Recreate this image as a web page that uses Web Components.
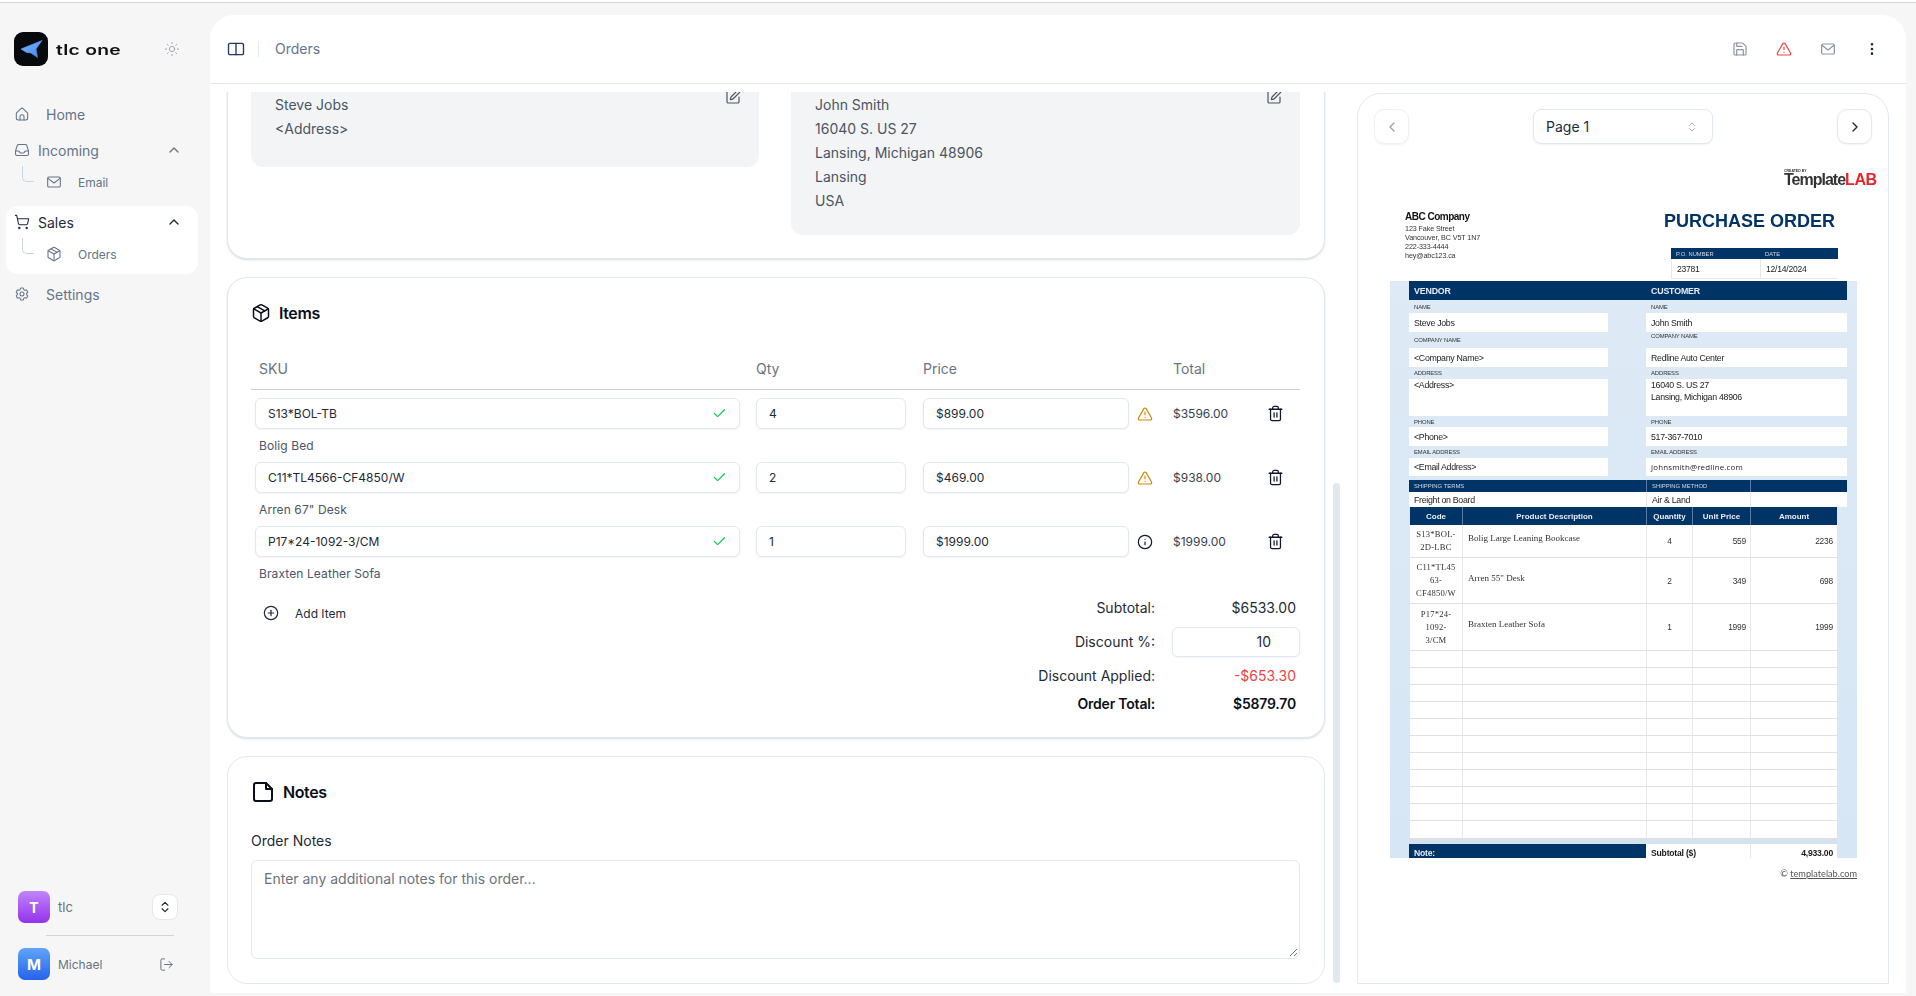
<!DOCTYPE html>
<html lang="en">
<head>
<meta charset="utf-8">
<title>Orders</title>
<style>
  html, body { margin: 0; padding: 0; height: 100%; overflow: hidden; background: #f6f6f6; font-family: Inter, "Liberation Sans", sans-serif; }
</style>
</head>
<body>
<app-shell></app-shell>

<script>
const ICONS = {
  home: '<path d="M3.5 10.6 10.4 4a2.3 2.3 0 0 1 3.2 0l6.9 6.6V18a3 3 0 0 1-3 3h-11a3 3 0 0 1-3-3z"/><path d="M9 21v-5a3 3 0 0 1 6 0v5"/>',
  inbox: '<path d="M2.25 13.5h3.86a2.25 2.25 0 0 1 2.012 1.244l.256.512a2.25 2.25 0 0 0 2.013 1.244h3.218a2.25 2.25 0 0 0 2.013-1.244l.256-.512a2.25 2.25 0 0 1 2.013-1.244h3.859m-19.5.338V18a2.25 2.25 0 0 0 2.25 2.25h15A2.25 2.25 0 0 0 21.75 18v-4.162c0-.224-.034-.447-.1-.661L19.24 5.338a2.25 2.25 0 0 0-2.15-1.588H6.911a2.25 2.25 0 0 0-2.15 1.588L2.35 13.177a2.25 2.25 0 0 0-.1.661Z"/>',
  mail: '<rect x="2.5" y="4.5" width="19" height="15" rx="2"/><path d="m3 6.5 9 7 9-7"/>',
  cart: '<circle cx="8" cy="21" r="1"/><circle cx="19" cy="21" r="1"/><path d="M2.05 2.05h2l2.66 12.42a2 2 0 0 0 2 1.58h9.78a2 2 0 0 0 1.95-1.57l1.65-7.43H5.12"/>',
  box: '<path d="m7.5 4.27 9 5.15"/><path d="M21 8a2 2 0 0 0-1-1.73l-7-4a2 2 0 0 0-2 0l-7 4A2 2 0 0 0 3 8v8a2 2 0 0 0 1 1.73l7 4a2 2 0 0 0 2 0l7-4A2 2 0 0 0 21 16Z"/><path d="m3.3 7 8.7 5 8.7-5"/><path d="M12 22V12"/>',
  cog: '<path d="M9.594 3.94c.09-.542.56-.94 1.11-.94h2.593c.55 0 1.02.398 1.11.94l.213 1.281c.063.374.313.686.645.87.074.04.147.083.22.127.325.196.72.257 1.075.124l1.217-.456a1.125 1.125 0 0 1 1.37.49l1.296 2.247a1.125 1.125 0 0 1-.26 1.431l-1.003.827c-.293.241-.438.613-.43.992a7.723 7.723 0 0 1 0 .255c-.008.378.137.75.43.991l1.004.827c.424.35.534.955.26 1.43l-1.298 2.247a1.125 1.125 0 0 1-1.369.491l-1.217-.456c-.355-.133-.75-.072-1.076.124a6.47 6.47 0 0 1-.22.128c-.331.183-.581.495-.644.869l-.213 1.281c-.09.543-.56.94-1.11.94h-2.594c-.55 0-1.019-.398-1.11-.94l-.213-1.281c-.062-.374-.312-.686-.644-.87a6.52 6.52 0 0 1-.22-.127c-.325-.196-.72-.257-1.076-.124l-1.217.456a1.125 1.125 0 0 1-1.369-.49l-1.297-2.247a1.125 1.125 0 0 1 .26-1.431l1.004-.827c.292-.24.437-.613.43-.991a6.932 6.932 0 0 1 0-.255c.007-.38-.138-.751-.43-.992l-1.004-.827a1.125 1.125 0 0 1-.26-1.43l1.297-2.247a1.125 1.125 0 0 1 1.37-.491l1.216.456c.356.133.751.072 1.076-.124.072-.044.146-.086.22-.128.332-.183.582-.495.644-.869l.214-1.28Z"/><path d="M15 12a3 3 0 1 1-6 0 3 3 0 0 1 6 0Z"/>',
  sun: '<circle cx="12" cy="12" r="4"/><path d="M12 2v2M12 20v2M4.93 4.93l1.41 1.41M17.66 17.66l1.41 1.41M2 12h2M20 12h2M6.34 17.66l-1.41 1.41M19.07 4.93l-1.41 1.41"/>',
  panel: '<rect x="2" y="4.5" width="20" height="15" rx="2"/><path d="M12 4.5v15"/>',
  pen: '<path d="M12 3H5a2 2 0 0 0-2 2v14a2 2 0 0 0 2 2h14a2 2 0 0 0 2-2v-7"/><path d="M18.375 2.625a1 1 0 0 1 3 3l-9.013 9.014a2 2 0 0 1-.853.505l-2.873.84a.5.5 0 0 1-.62-.62l.84-2.873a2 2 0 0 1 .506-.852z"/>',
  warn: '<path d="m21.73 18-8-14a2 2 0 0 0-3.48 0l-8 14A2 2 0 0 0 4 21h16a2 2 0 0 0 1.73-3"/><path d="M12 9v4"/><path d="M12 17h.01"/>',
  info: '<circle cx="12" cy="12" r="10"/><path d="M12 16v-4"/><path d="M12 8h.01"/>',
  trash: '<path d="M3 6h18"/><path d="M19 6v14c0 1-1 2-2 2H7c-1 0-2-1-2-2V6"/><path d="M8 6V4c0-1 1-2 2-2h4c1 0 2 1 2 2v2"/><path d="M10 11v6"/><path d="M14 11v6"/>',
  check: '<path d="M20 6 9 17l-5-5"/>',
  plus: '<circle cx="12" cy="12" r="10"/><path d="M8 12h8"/><path d="M12 8v8"/>',
  note: '<path d="M15 3H5a2 2 0 0 0-2 2v14a2 2 0 0 0 2 2h14a2 2 0 0 0 2-2V9z"/><path d="M15 3v6h6"/>',
  save: '<path d="M15.2 3a2 2 0 0 1 1.4.6l3.8 3.8a2 2 0 0 1 .6 1.4V19a2 2 0 0 1-2 2H5a2 2 0 0 1-2-2V5a2 2 0 0 1 2-2z"/><path d="M17 21v-7a1 1 0 0 0-1-1H8a1 1 0 0 0-1 1v7"/><path d="M7 3v4a1 1 0 0 0 1 1h7"/>',
  dots: '<circle cx="12" cy="5" r="1"/><circle cx="12" cy="12" r="1"/><circle cx="12" cy="19" r="1"/>',
  up: '<path d="m18 15-6-6-6 6"/>',
  left: '<path d="m15 18-6-6 6-6"/>',
  right: '<path d="m9 18 6-6-6-6"/>',
  updown: '<path d="m7 15 5 5 5-5"/><path d="m7 9 5-5 5 5"/>',
  logout: '<path d="M9 21H5a2 2 0 0 1-2-2V5a2 2 0 0 1 2-2h4"/><path d="m16 17 5-5-5-5"/><path d="M21 12H9"/>'
};

class UiIcon extends HTMLElement {
  connectedCallback() {
    const size = this.getAttribute('size') || 16;
    const stroke = this.getAttribute('stroke') || 2;
    const root = this.attachShadow({ mode: 'open' });
    root.innerHTML = `
      <style>:host { display: inline-flex; flex: none; width: ${size}px; height: ${size}px; } svg { display: block; }</style>
      <svg xmlns="http://www.w3.org/2000/svg" viewBox="0 0 24 24" width="${size}" height="${size}" fill="none" stroke="currentColor" stroke-width="${stroke}" stroke-linecap="round" stroke-linejoin="round">${ICONS[this.getAttribute('name')]}</svg>`;
  }
}
customElements.define('ui-icon', UiIcon);

// sidebar row, top level or child
class NavItem extends HTMLElement {
  connectedCallback() {
    const icon = this.getAttribute('icon');
    const child = this.hasAttribute('child');
    const wide = this.hasAttribute('wide');
    const open = this.hasAttribute('open');
    const active = this.hasAttribute('active');
    const root = this.attachShadow({ mode: 'open' });
    root.innerHTML = `
      <style>
        :host { display: flex; align-items: center; height: 32px; font-size: 14px; color: ${active ? '#1e293b' : '#64748b'}; }
        .icon { margin-left: 8px; display: flex; margin-right: ${wide ? 16 : 8}px; }
        :host([child]) { font-size: 12px; }
        .branch { width: 12px; height: 16px; margin-left: 16px; margin-right: 12px; align-self: flex-start; border-left: 1px solid #cbd5e1; border-bottom: 1px solid #cbd5e1; border-bottom-left-radius: 5px; box-sizing: border-box; }
        :host([child]) .icon { margin-left: 0; margin-right: 16px; }
        .chev { margin-left: auto; margin-right: 16px; display: flex; }
      </style>
      ${child ? '<span class="branch"></span>' : ''}
      <span class="icon"><ui-icon name="${icon}" size="16" stroke="1.6"></ui-icon></span>
      <slot></slot>
      ${open ? '<span class="chev"><ui-icon name="up" size="16" stroke="2"></ui-icon></span>' : ''}`;
  }
}
customElements.define('nav-item', NavItem);

const sideTemplate = document.createElement('template');
sideTemplate.innerHTML = `
  <style>
    :host { display: flex; flex-direction: column; flex: none; width: 210px; box-sizing: border-box; padding-bottom: 16px; }
    .brand { display: flex; align-items: center; margin: 29px 0 32px 14px; }
    .logo { width: 34px; height: 34px; border-radius: 9px; background: #08090c; display: block; flex: none; }
    .word { margin-left: 8px; font: 600 14px Inter, sans-serif; color: #111; letter-spacing: .2px; display: inline-block; transform: scaleX(1.38); transform-origin: left center; white-space: nowrap; }
    .sun { margin-left: auto; margin-right: 30px; color: #9ca3af; display: flex; }
    nav { display: flex; flex-direction: column; margin-left: 6px; width: 192px; gap: 4px; }
    .open { display: flex; flex-direction: column; }
    .group { background: #fff; border-radius: 12px; padding-bottom: 4px; margin-top: 4px; }
    .foot { margin-top: auto; display: flex; flex-direction: column; padding-left: 18px; }
    .row { display: flex; align-items: center; height: 32px; }
    .av { width: 32px; height: 32px; border-radius: 7px; color: #fff; font-size: 14px; font-weight: 700; display: flex; align-items: center; justify-content: center; margin-right: 8px; }
    .t { background: linear-gradient(#c084fc, #9333ea); }
    .m { background: linear-gradient(#60a5fa, #2563eb); font-size: 15px; }
    .name { color: #6b7280; font-size: 13px; }
    .michael { font-size: 12px; }
    .sw { margin-left: auto; margin-right: 32px; width: 26px; height: 26px; box-sizing: border-box; background: #fff; border: 1px solid #e5e7eb; border-radius: 8px; display: flex; align-items: center; justify-content: center; color: #1f2937; }
    .out { margin-left: auto; margin-right: 36px; color: #6b7280; display: flex; }
    hr { border: 0; height: 1px; background: #d4d4d8; margin: 12px 36px 12px 28px; }
  </style>
  <div class="brand">
    <svg class="logo" viewBox="0 0 34 34" xmlns="http://www.w3.org/2000/svg">
      <defs><linearGradient id="pl" x1="0" y1="0" x2="1" y2="1"><stop offset="0" stop-color="#7ab3fc"/><stop offset="1" stop-color="#4189f7"/></linearGradient></defs>
      <path fill="url(#pl)" stroke="url(#pl)" stroke-width=".6" stroke-linejoin="round" d="M7 17 28 8.5 22 17 23.5 25.5 17 21 12.5 20.5z"/>
    </svg>
    <span class="word">tlc one</span>
    <span class="sun"><ui-icon name="sun" size="16" stroke="1.4"></ui-icon></span>
  </div>
  <nav>
    <nav-item icon="home" wide>Home</nav-item>
    <div class="open">
      <nav-item icon="inbox" open>Incoming</nav-item>
      <nav-item icon="mail" child>Email</nav-item>
    </div>
    <div class="open group">
      <nav-item icon="cart" open active>Sales</nav-item>
      <nav-item icon="box" child>Orders</nav-item>
    </div>
    <nav-item icon="cog" wide>Settings</nav-item>
  </nav>
  <div class="foot">
    <div class="row">
      <span class="av t">T</span><span class="name">tlc</span>
      <span class="sw"><ui-icon name="updown" size="14" stroke="2"></ui-icon></span>
    </div>
    <hr>
    <div class="row">
      <span class="av m">M</span><span class="name michael">Michael</span>
      <span class="out"><ui-icon name="logout" size="15" stroke="1.6"></ui-icon></span>
    </div>
  </div>`;
class SideBar extends HTMLElement {
  constructor() {
    super();
    this.attachShadow({ mode: 'open' }).appendChild(sideTemplate.content.cloneNode(true));
  }
}
customElements.define('side-bar', SideBar);

const topTemplate = document.createElement('template');
topTemplate.innerHTML = `
  <style>
    :host { display: flex; align-items: center; height: 69px; padding-bottom: 1px; flex: none; box-sizing: border-box; border-bottom: 1px solid #e2e8f0; padding-left: 17px; padding-right: 26px; }
    .panel { color: #1e3a5f; display: flex; }
    .sep { width: 1px; height: 16px; background: #e2e8f0; margin: 0 16px 0 13px; }
    .crumb { font-size: 14px; color: #64748b; }
    .acts { margin-left: auto; display: flex; gap: 28px; color: #8a94a6; }
    .red { color: #ef4444; }
    .dark { color: #1e293b; }
  </style>
  <span class="panel"><ui-icon name="panel" size="18" stroke="1.8"></ui-icon></span>
  <span class="sep"></span>
  <span class="crumb">Orders</span>
  <div class="acts">
    <ui-icon name="save" size="16" stroke="1.8"></ui-icon>
    <ui-icon class="red" name="warn" size="16" stroke="1.8"></ui-icon>
    <ui-icon name="mail" size="16" stroke="1.8"></ui-icon>
    <ui-icon class="dark" name="dots" size="16" stroke="2"></ui-icon>
  </div>`;
class TopBar extends HTMLElement {
  constructor() {
    super();
    this.attachShadow({ mode: 'open' }).appendChild(topTemplate.content.cloneNode(true));
  }
}
customElements.define('top-bar', TopBar);

class CardBox extends HTMLElement {
  constructor() {
    super();
    this.attachShadow({ mode: 'open' }).innerHTML = `
      <style>
        :host { display: block; box-sizing: border-box; background: #fff; border: 1px solid #e2e8f0; border-radius: 20px; padding: 23px 24px 23px 23px; box-shadow: 0 1px 2px rgba(100,116,139,.25); }
        :host([flat]) { box-shadow: none; padding-bottom: 24px; }
      </style>
      <slot></slot>`;
  }
}
customElements.define('card-box', CardBox);

class CardHeading extends HTMLElement {
  connectedCallback() {
    const size = this.getAttribute('size');
    const gap = this.getAttribute('gap');
    this.attachShadow({ mode: 'open' }).innerHTML = `
      <style>
        :host { display: flex; align-items: center; height: 24px; font-size: 16px; font-weight: 600; color: #0b0f19; letter-spacing: -.4px; }
        ui-icon { margin-right: ${gap}px; margin-left: ${this.getAttribute('left')}px; }
      </style>
      <ui-icon name="${this.getAttribute('icon')}" size="${size}" stroke="${this.getAttribute('stroke')}"></ui-icon><slot></slot>`;
  }
}
customElements.define('card-heading', CardHeading);

class AddressBox extends HTMLElement {
  constructor() {
    super();
    this.attachShadow({ mode: 'open' }).innerHTML = `
      <style>
        :host { display: flex; justify-content: space-between; background: #f3f4f6; border-radius: 12px; padding: 16px 18px 24px 24px; font-size: 14px; line-height: 24px; color: #4b5563; align-self: start; }
        ui-icon { color: #4b5563; margin-top: -4px; }
      </style>
      <div><slot></slot></div>
      <ui-icon name="pen" size="16" stroke="1.8"></ui-icon>`;
  }
}
customElements.define('address-box', AddressBox);

class TextField extends HTMLElement {
  constructor() {
    super();
    this.attachShadow({ mode: 'open' }).innerHTML = `
      <style>
        :host { display: flex; align-items: center; justify-content: space-between; height: 31px; box-sizing: border-box; background: #fff; border: 1px solid #e2e8f0; border-radius: 6px; padding: 0 12px 0 12px; font-size: 12px; color: #1f2937; box-shadow: 0 1px 2px rgba(15,23,42,.05); }
      </style>
      <slot></slot><slot name="end"></slot>`;
  }
}
customElements.define('text-field', TextField);

const GRID = 'display: grid; grid-template-columns: 501px 167px 206px 44px 82px 40px; padding-left: 4px;';

class LineItem extends HTMLElement {
  connectedCallback() {
    const a = n => this.getAttribute(n);
    const status = a('status') === 'warn'
      ? '<ui-icon class="warn" name="warn" size="16" stroke="1.8"></ui-icon>'
      : '<ui-icon class="info" name="info" size="16" stroke="1.8"></ui-icon>';
    this.attachShadow({ mode: 'open' }).innerHTML = `
      <style>
        :host { display: block; height: 64px; }
        .grid { ${GRID} align-items: center; }
        .sku { margin-right: 16px; } .qty { margin-right: 17px; }
        .check { color: #22c55e; }
        .st { padding-left: 8px; display: flex; }
        .warn { color: #ca8a04; } .info { color: #111827; }
        .total { font-size: 12px; color: #374151; }
        .bin { display: flex; justify-content: center; color: #111827; }
        .desc { padding-left: 4px; margin-left: 4px; height: 33px; display: flex; align-items: center; font-size: 12px; letter-spacing: .1px; color: #4b5563; }
      </style>
      <div class="grid">
        <text-field class="sku">${a('sku')}<ui-icon class="check" slot="end" name="check" size="15" stroke="2"></ui-icon></text-field>
        <text-field class="qty">${a('qty')}</text-field>
        <text-field>${a('price')}</text-field>
        <span class="st">${status}</span>
        <span class="total">${a('total')}</span>
        <span class="bin"><ui-icon name="trash" size="17" stroke="1.8"></ui-icon></span>
      </div>
      <div class="desc">${a('desc')}</div>`;
  }
}
customElements.define('line-item', LineItem);

const itemsTemplate = document.createElement('template');
itemsTemplate.innerHTML = `
  <style>
    :host { display: block; }
    .head { ${GRID} margin-top: 34px; height: 31px; box-sizing: border-box; border-bottom: 1px solid #cbd0d6; margin-bottom: 8px; font-size: 14px; line-height: 20px; color: #6b7280; }
    .sku { padding-left: 4px; }
    .foot { display: flex; justify-content: space-between; }
    .add { display: flex; align-items: center; height: 20px; margin: 13px 0 0 12px; font-size: 12px; color: #1f2937; }
    .add ui-icon { margin-right: 16px; }
    .sum { display: grid; grid-template-columns: auto 128px; column-gap: 17px; align-items: center; margin-top: 8px; font-size: 14px; line-height: 20px; color: #1f2937; }
    .sum > span:nth-child(odd) { text-align: right; }
    .v { text-align: right; padding-right: 4px; }
    .pct { height: 30px; box-sizing: border-box; background: #fff; border: 1px solid #e2e8f0; border-radius: 6px; display: flex; align-items: center; justify-content: flex-end; padding-right: 28px; margin: 9px 0; color: #1f2937; box-shadow: 0 1px 2px rgba(15,23,42,.05); }
    .red { color: #ef4444; }
    .b { font-weight: 600; color: #0b0f19; margin-top: 8px; letter-spacing: -.2px; }
  </style>
  <card-heading icon="box" size="20" stroke="1.8" gap="8" left="0">Items</card-heading>
  <div class="head"><span class="sku">SKU</span><span>Qty</span><span>Price</span><span></span><span>Total</span></div>
  <line-item sku="S13*BOL-TB" qty="4" price="$899.00" status="warn" total="$3596.00" desc="Bolig Bed"></line-item>
  <line-item sku="C11*TL4566-CF4850/W" qty="2" price="$469.00" status="warn" total="$938.00" desc="Arren 67&quot; Desk"></line-item>
  <line-item sku="P17*24-1092-3/CM" qty="1" price="$1999.00" status="info" total="$1999.00" desc="Braxten Leather Sofa"></line-item>
  <div class="foot">
    <div class="add"><ui-icon name="plus" size="16" stroke="1.8"></ui-icon>Add Item</div>
    <div class="sum">
      <span>Subtotal:</span><span class="v">$6533.00</span>
      <span>Discount %:</span><span class="pct">10</span>
      <span>Discount Applied:</span><span class="v red">-$653.30</span>
      <span class="b">Order Total:</span><span class="v b">$5879.70</span>
    </div>
  </div>`;
class OrderItems extends HTMLElement {
  constructor() {
    super();
    this.attachShadow({ mode: 'open' }).appendChild(itemsTemplate.content.cloneNode(true));
  }
}
customElements.define('order-items', OrderItems);

const notesTemplate = document.createElement('template');
notesTemplate.innerHTML = `
  <style>
    :host { display: block; }
    .lab { margin-top: 27px; font-size: 14px; line-height: 20px; color: #1f2937; }
    .area { margin-top: 9px; height: 99px; box-sizing: border-box; border: 1px solid #e2e8f0; border-radius: 6px; padding: 8px 12px 9px; font-size: 14px; line-height: 20px; color: #6b7280; display: flex; flex-direction: column; }
    .grip { margin-top: auto; align-self: flex-end; margin-right: -11px; margin-bottom: -8px; display: block; }
  </style>
  <card-heading icon="note" size="24" stroke="2" gap="8" left="0">Notes</card-heading>
  <div class="lab">Order Notes</div>
  <div class="area">Enter any additional notes for this order...
    <svg class="grip" width="10" height="10" viewBox="0 0 10 10" xmlns="http://www.w3.org/2000/svg"><path d="M9 2 2 9M9 6 6 9" stroke="#6b7280" fill="none"/></svg>
  </div>`;
class OrderNotes extends HTMLElement {
  constructor() {
    super();
    this.attachShadow({ mode: 'open' }).appendChild(notesTemplate.content.cloneNode(true));
  }
}
customElements.define('order-notes', OrderNotes);

// the order form picture in the preview
const docTemplate = document.createElement('template');
docTemplate.innerHTML = `
  <style>
    :host { display: block; width: 486px; margin-left: 32px; font-family: "Liberation Sans", Arial, sans-serif; color: #222; filter: blur(.35px); }
    .brandrow { display: flex; flex-direction: column; align-items: flex-end; margin-top: 26px; height: 16px; }
    .created { font-size: 3.5px; line-height: 3px; align-self: flex-end; width: 92px; color: #333; font-weight: 700; }
    .lab { font-size: 16px; font-weight: 700; line-height: 13px; letter-spacing: -1px; color: #333; width: 92px; white-space: nowrap; }
    .lab b { color: #e5262c; letter-spacing: -.4px; }
    .head { display: flex; margin-top: 25px; height: 67px; width: 467px; }
    .co { width: 259px; padding-left: 15px; font-size: 7.2px; line-height: 9px; color: #333; letter-spacing: -.12px; white-space: nowrap; }
    .co b { display: block; font-size: 10px; line-height: 12.5px; color: #111; letter-spacing: -.5px; }
    .po h1 { margin: 0; font-size: 18px; line-height: 20px; font-weight: 700; color: #003366; white-space: nowrap; }
    .potab { margin: 17px 0 0 7px; width: 167px; display: grid; grid-template-columns: 89px 78px; grid-template-rows: 11px 19px; border-bottom: 1px solid #e5e7eb; box-sizing: border-box; }
    .potab span { padding-left: 5px; display: flex; align-items: center; }
    .potab .h { background: #003366; color: #cfdbe8; font-size: 5.8px; }
    .potab .c { font-size: 8.6px; border-left: 1px solid #e5e7eb; letter-spacing: -.25px; }
    .band { margin-top: 3px; width: 467px; height: 577px; box-sizing: border-box; padding-left: 19px; background: linear-gradient(#deeaf6, #d6e6f4); display: flex; flex-direction: column; }
    .band > * { flex: none; }
    .bar { display: grid; grid-template-columns: 237px 201px; height: 19px; width: 438px; background: #003366; color: #e6edf5; font-size: 8.8px; font-weight: 700; align-items: center; letter-spacing: -.15px; }
    .bar span { padding-left: 5px; }
    .cols { display: grid; grid-template-columns: 199px 201px; column-gap: 38px; width: 438px; height: 180px; }
    .col { display: flex; flex-direction: column; }
    .l { font-size: 5.9px; color: #333; display: flex; align-items: center; padding-left: 5px; flex: none; white-space: nowrap; letter-spacing: -.1px; }
    .v { background: #fff; font-size: 8.8px; letter-spacing: -.3px; padding-left: 5px; display: flex; align-items: center; flex: none; white-space: nowrap; }
    .top { display: block; line-height: 12px; padding-top: 0; }
    .email { font-family: "Open Sans", sans-serif; font-size: 7.9px; letter-spacing: .2px; }
    .ship, .shipv { display: grid; grid-template-columns: 237px 104px 97px; width: 438px; }
    .ship { height: 12px; background: #003366; color: #cfdbe8; font-size: 5.9px; }
    .shipv { height: 15px; background: #fff; font-size: 8.8px; letter-spacing: -.3px; }
    .ship span, .shipv span { padding-left: 5px; display: flex; align-items: center; }
    .ship span + span { border-left: 1px solid #5b7da3; }
    .shipv span + span { border-left: 1px solid #e5e7eb; }
    .tab { display: grid; grid-template-columns: 52px 184px 46px 58px 87px; width: 427px; margin-left: 1px; background: #fff; }
    .th { height: 18px; background: #003366; color: #e6edf5; font-size: 8px; font-weight: 700; display: flex; align-items: center; justify-content: center; border-left: 1px solid #5b7da3; white-space: nowrap; box-sizing: border-box; }
    .th:first-child { border-left: 0; }
    .td { border-left: 1px solid #e8e8e8; border-bottom: 1px solid #dfe1e4; box-sizing: border-box; display: flex; align-items: center; font-size: 8.4px; letter-spacing: -.2px; color: #333; height: 17px; }
    .td.first { border-left: 0; }
    .code { font: 8.6px/13px "Liberation Serif", serif; text-align: center; justify-content: center; letter-spacing: .2px; }
    .desc { font: 9px "Liberation Serif", serif; padding: 0 0 6px 5px; white-space: nowrap; letter-spacing: 0; }
    .q { justify-content: center; }
    .r { justify-content: flex-end; padding-right: 4px; }
    .fgap { height: 5px; width: 428px; background: #d5e2ee; }
    .ffoot { display: grid; grid-template-columns: 237px 104px 87px; height: 14px; width: 428px; background: #fff; font-size: 8.6px; letter-spacing: -.2px; font-weight: 700; color: #1a1a1a; }
    .ffoot span { display: flex; align-items: center; padding: 4px 0 0 5px; }
    .ffoot .note { background: #003366; color: #e6edf5; }
    .ffoot .amt { justify-content: flex-end; padding: 4px 4px 0 0; border-left: 1px solid #e5e7eb; }
    .copy { width: 467px; text-align: right; margin-top: 10px; font: 9.2px/12px Lato, sans-serif; color: #555; }
    .copy u { text-underline-offset: 1px; }
  </style>
  <div class="brandrow">
    <span class="created">CREATED BY</span>
    <span class="lab">Template<b>LAB</b></span>
  </div>
  <div class="head">
    <div class="co"><b>ABC Company</b>123 Fake Street<br>Vancouver, BC V5T 1N7<br>222-333-4444<br>hey@abc123.ca</div>
    <div class="po">
      <h1>PURCHASE ORDER</h1>
      <div class="potab">
        <span class="h">P.O. NUMBER</span><span class="h">DATE</span>
        <span class="c">23781</span><span class="c">12/14/2024</span>
      </div>
    </div>
  </div>
  <div class="band">
    <div class="bar"><span>VENDOR</span><span>CUSTOMER</span></div>
    <div class="cols">
      <div class="col">
        <span class="l" style="height:13px">NAME</span><span class="v" style="height:19px">Steve Jobs</span>
        <span class="l" style="height:16px">COMPANY NAME</span><span class="v" style="height:19px">&lt;Company Name&gt;</span>
        <span class="l" style="height:12px">ADDRESS</span><span class="v top" style="height:37px">&lt;Address&gt;</span>
        <span class="l" style="height:11px">PHONE</span><span class="v" style="height:19px">&lt;Phone&gt;</span>
        <span class="l" style="height:12px">EMAIL ADDRESS</span><span class="v" style="height:18px">&lt;Email Address&gt;</span>
      </div>
      <div class="col">
        <span class="l" style="height:13px">NAME</span><span class="v" style="height:19px">John Smith</span>
        <span class="l" style="height:16px;align-items:flex-start;line-height:8px">COMPANY NAME</span><span class="v" style="height:19px">Redline Auto Center</span>
        <span class="l" style="height:12px">ADDRESS</span><span class="v top" style="height:37px">16040 S. US 27<br>Lansing, Michigan 48906</span>
        <span class="l" style="height:11px">PHONE</span><span class="v" style="height:19px">517-367-7010</span>
        <span class="l" style="height:12px">EMAIL ADDRESS</span><span class="v email" style="height:18px">johnsmith@redline.com</span>
      </div>
    </div>
    <div class="ship"><span>SHIPPING TERMS</span><span>SHIPPING METHOD</span><span></span></div>
    <div class="shipv"><span>Freight on Board</span><span>Air &amp; Land</span><span></span></div>
    <div class="tab" id="tab">
      <div class="th">Code</div><div class="th">Product Description</div><div class="th">Quantity</div><div class="th">Unit Price</div><div class="th">Amount</div>
    </div>
    <div class="fgap"></div>
    <div class="ffoot"><span class="note">Note:</span><span>Subtotal ($)</span><span class="amt">4,933.00</span></div>
  </div>
  <div class="copy">© <u>templatelab.com</u></div>`;

const PO_ROWS = [
  ['S13*BOL-<br>2D-LBC', 'Bolig Large Leaning Bookcase', '4', '559', '2236', 33],
  ['C11*TL45<br>63-<br>CF4850/W', 'Arren 55" Desk', '2', '349', '698', 46],
  ['P17*24-<br>1092-<br>3/CM', 'Braxten Leather Sofa', '1', '1999', '1999', 47]
];

class PoDocument extends HTMLElement {
  constructor() {
    super();
    const root = this.attachShadow({ mode: 'open' });
    root.appendChild(docTemplate.content.cloneNode(true));
    let html = '';
    for (const [code, desc, q, u, amt, h] of PO_ROWS) {
      const s = `style="height:${h}px"`;
      html += `<div class="td first code" ${s}><div>${code}</div></div><div class="td desc" ${s}>${desc}</div><div class="td q" ${s}>${q}</div><div class="td r" ${s}>${u}</div><div class="td r" ${s}>${amt}</div>`;
    }
    for (let i = 0; i < 11; i++) {
      const s = `style="height:${i === 10 ? 18 : 17}px"`;
      html += `<div class="td first" ${s}></div><div class="td" ${s}></div><div class="td" ${s}></div><div class="td" ${s}></div><div class="td" ${s}></div>`;
    }
    root.getElementById('tab').insertAdjacentHTML('beforeend', html);
  }
}
customElements.define('po-document', PoDocument);

const pdfTemplate = document.createElement('template');
pdfTemplate.innerHTML = `
  <style>
    :host { display: block; flex: none; width: 532px; height: 891px; margin-top: 1px; box-sizing: border-box; border: 1px solid #e2e8f0; border-radius: 24px 24px 0 0; background: #fff; }
    .bar { display: flex; justify-content: space-between; padding: 15px 16px 0 16px; }
    .btn { width: 35px; height: 35px; box-sizing: border-box; border: 1px solid #e2e8f0; border-radius: 10px; display: flex; align-items: center; justify-content: center; background: #fff; color: #1e293b; box-shadow: 0 1px 2px rgba(15,23,42,.05); }
    .btn.off { color: #94a3b8; border-color: #eef2f7; }
    .sel { width: 180px; height: 35px; box-sizing: border-box; border: 1px solid #e2e8f0; border-radius: 8px; display: flex; align-items: center; justify-content: space-between; padding: 0 14px 0 12px; font-size: 14px; color: #1e293b; box-shadow: 0 1px 2px rgba(15,23,42,.05); }
    .sel ui-icon { color: #94a3b8; }
  </style>
  <div class="bar">
    <span class="btn off"><ui-icon name="left" size="16" stroke="2"></ui-icon></span>
    <span class="sel">Page 1<ui-icon name="updown" size="12" stroke="1.6"></ui-icon></span>
    <span class="btn"><ui-icon name="right" size="16" stroke="2"></ui-icon></span>
  </div>
  <po-document></po-document>`;
class PdfViewer extends HTMLElement {
  constructor() {
    super();
    this.attachShadow({ mode: 'open' }).appendChild(pdfTemplate.content.cloneNode(true));
  }
}
customElements.define('pdf-viewer', PdfViewer);

const shellTemplate = document.createElement('template');
shellTemplate.innerHTML = `
  <style>
    :host { display: flex; flex-direction: column; height: 996px; overflow: hidden; }
    .strip { height: 3px; flex: none; box-sizing: border-box; background: #fff; border-bottom: 1px solid #d4d4d4; }
    .frame { display: flex; flex: 1; min-height: 0; }
    main { width: 1696px; flex: none; margin-top: 12px; margin-bottom: 3px; background: #fff; border-radius: 24px 24px 0 0; display: flex; flex-direction: column; overflow: hidden; }
    .body { flex: 1; min-height: 0; display: flex; padding-top: 8px; }
    .scroll { width: 1123px; box-sizing: border-box; flex: none; overflow: hidden; padding: 0 8px 0 17px; }
    .stack { display: flex; flex-direction: column; gap: 18px; margin-top: -40px; }
    .addr { display: grid; grid-template-columns: 508px 509px; column-gap: 32px; margin-top: 1px; }
    .track { width: 7px; flex: none; margin-right: 17px; }
    .thumb { margin-top: 391px; height: 500px; background: #e2e8f0; border-radius: 4px; }
  </style>
  <div class="strip"></div>
  <div class="frame">
    <side-bar></side-bar>
    <main>
      <top-bar></top-bar>
      <div class="body">
        <div class="scroll">
          <div class="stack">
            <card-box>
              <div class="addr">
                <address-box style="padding-bottom:26px">Steve Jobs<br>&lt;Address&gt;</address-box>
                <address-box style="padding-bottom:22px">John Smith<br>16040 S. US 27<br>Lansing, Michigan 48906<br>Lansing<br>USA</address-box>
              </div>
            </card-box>
            <card-box><order-items></order-items></card-box>
            <card-box flat><order-notes></order-notes></card-box>
          </div>
        </div>
        <div class="track"><div class="thumb"></div></div>
        <pdf-viewer></pdf-viewer>
      </div>
    </main>
  </div>`;
class AppShell extends HTMLElement {
  constructor() {
    super();
    this.attachShadow({ mode: 'open' }).appendChild(shellTemplate.content.cloneNode(true));
  }
}
customElements.define('app-shell', AppShell);
</script>
</body>
</html>
